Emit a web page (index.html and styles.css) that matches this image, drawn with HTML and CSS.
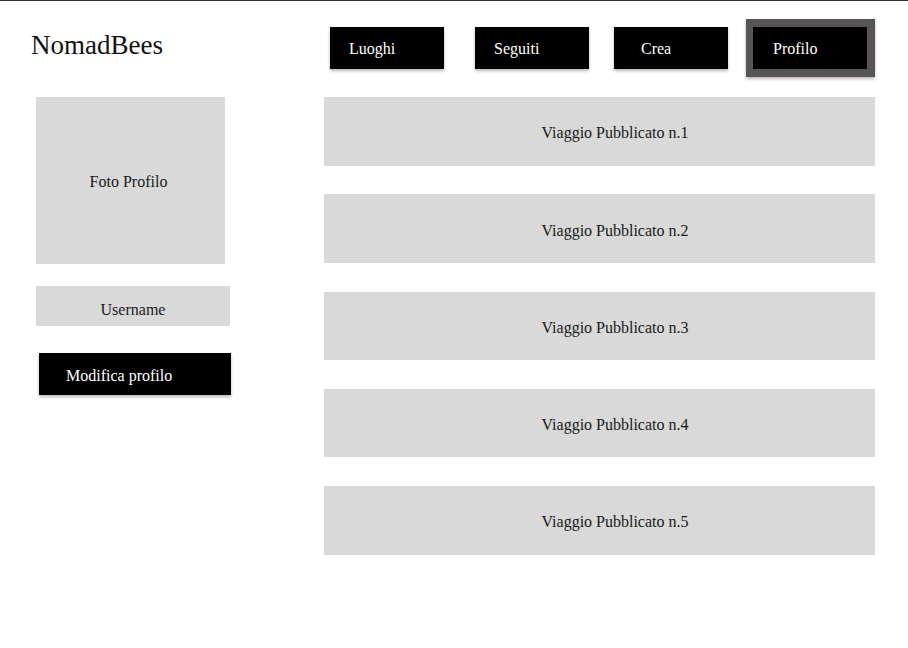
FILE: index.html
```html
<!DOCTYPE html>
<html lang="it">
<head>
<meta charset="utf-8">
<title>NomadBees - Profilo</title>
<link rel="stylesheet" href="styles.css">
</head>
<body>
<div class="page">
  <header class="header">
    <div class="logo">NomadBees</div>
    <nav class="nav">
      <a class="nav-btn">Luoghi</a>
      <a class="nav-btn nav-btn--seguiti">Seguiti</a>
      <a class="nav-btn nav-btn--crea">Crea</a>
      <a class="nav-btn nav-btn--active">Profilo</a>
    </nav>
  </header>
  <main class="main">
    <aside class="sidebar">
      <div class="photo">Foto Profilo</div>
      <div class="username">Username</div>
      <a class="edit-btn">Modifica profilo</a>
    </aside>
    <section class="trips">
      <div class="trip">Viaggio Pubblicato n.1</div>
      <div class="trip">Viaggio Pubblicato n.2</div>
      <div class="trip">Viaggio Pubblicato n.3</div>
      <div class="trip">Viaggio Pubblicato n.4</div>
      <div class="trip">Viaggio Pubblicato n.5</div>
    </section>
  </main>
</div>
</body>
</html>
```

FILE: styles.css
```css
* { box-sizing: border-box; }
html, body {
  margin: 0;
  padding: 0;
  background: #ffffff;
}
body {
  font-family: "Liberation Serif", "Times New Roman", serif;
  color: #1a1a1a;
  font-size: 16px;
}
.page {
  border-top: 1px solid #333333;
  width: 908px;
  min-height: 648px;
}
.header {
  display: flex;
  align-items: flex-start;
  padding: 18px 0 0 31px;
  height: 96px;
}
.logo {
  font-size: 27px;
  line-height: 30px;
  margin-top: 11px;
  width: 299px;
  color: #111;
}
.nav {
  display: flex;
  align-items: center;
  height: 58px;
}
.nav-btn {
  display: block;
  width: 114px;
  height: 42px;
  line-height: 44px;
  background: #000;
  color: #fff;
  padding-left: 19px;
  font-size: 16px;
  box-shadow: 0 2px 3px rgba(0, 0, 0, 0.28);
}
.nav-btn--seguiti { margin-left: 31px; }
.nav-btn--crea {
  margin-left: 25px;
  padding-left: 27px;
}
.nav-btn--active {
  margin-left: 18px;
  width: 129px;
  height: 58px;
  line-height: 44px;
  border: 8px solid #595454;
  border-left-width: 7px;
  padding-left: 20px;
}
.main {
  display: grid;
  grid-template-columns: 195px 551px;
  column-gap: 93px;
  padding-left: 36px;
  align-items: start;
}
.sidebar {
  display: flex;
  flex-direction: column;
  align-items: flex-start;
}
.photo {
  width: 189px;
  height: 167px;
  background: #d9d9d9;
  display: flex;
  align-items: center;
  justify-content: center;
  padding: 3px 4px 0 0;
}
.username {
  margin-top: 22px;
  width: 194px;
  height: 40px;
  background: #d9d9d9;
  display: flex;
  align-items: center;
  justify-content: center;
  padding: 7px 0 0 0;
}
.edit-btn {
  display: block;
  margin: 27px 0 0 3px;
  width: 192px;
  height: 42px;
  line-height: 45px;
  background: #000;
  color: #fff;
  padding-left: 27px;
  box-shadow: 0 2px 3px rgba(0, 0, 0, 0.28);
}
.trips {
  display: flex;
  flex-direction: column;
  gap: 28.75px;
}
.trip {
  height: 68.5px;
  background: #d9d9d9;
  display: flex;
  align-items: center;
  justify-content: center;
  padding: 4px 0 0 31px;
}
```
